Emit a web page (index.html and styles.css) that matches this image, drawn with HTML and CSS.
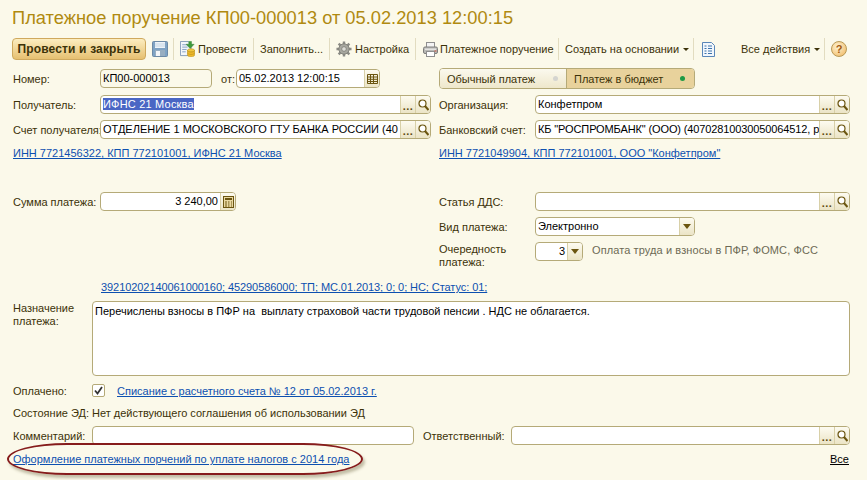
FILE: index.html
```html
<!DOCTYPE html>
<html lang="ru">
<head>
<meta charset="utf-8">
<title>Платежное поручение</title>
<link rel="stylesheet" href="styles.css">
</head>
<body>
<div class="page">
  <h1 class="title">Платежное поручение КП00-000013 от 05.02.2013 12:00:15</h1>

  <div class="toolbar">
    <button class="primary">Провести и закрыть</button>
    <svg class="ic save" width="16" height="16" viewBox="0 0 16 16"><rect x=".5" y=".5" width="15" height="15" rx="1" fill="#7fa3c4" stroke="#6d8aa6"/><rect x="3" y="1" width="10" height="6" fill="#eef4f9"/><path d="M3 3h10M3 5h10" stroke="#c4d5e4"/><rect x="3" y="9" width="10" height="6" fill="#98aec1"/><rect x="4" y="10" width="4" height="5" fill="#f4f6f8"/></svg>
    <i class="sep s1"></i>
    <svg class="ic post" width="15" height="16" viewBox="0 0 17 17" preserveAspectRatio="none"><path d="M.5.5h9l3 3v12H.5z" fill="#f3f6fa" stroke="#7f97b5"/><path d="M2.500 4h6M2.500 6.500h6M2.500 9h5M2.500 11.500h4" stroke="#7e9cc0"/><path d="M10 0h3v3h3l-4.500 4.500L7 3h3z" transform="translate(0 .5)" fill="#3f9b3c" stroke="#2f7a2e" stroke-width=".5"/><ellipse cx="12.500" cy="10" rx="4" ry="1.800" fill="#f2c740" stroke="#b98d15" stroke-width=".6"/><path d="M8.500 10v5c0 1 1.800 1.800 4 1.800s4-.8 4-1.800v-5c0 1-1.800 1.800-4 1.800s-4-.8-4-1.800z" fill="#eeb92c" stroke="#b98d15" stroke-width=".6"/><path d="M8.500 12.500c0 1 1.800 1.800 4 1.800s4-.8 4-1.800" fill="none" stroke="#b98d15" stroke-width=".6"/></svg>
    <span class="tb t1">Провести</span>
    <i class="sep s2"></i>
    <span class="tb t2">Заполнить...</span>
    <i class="sep s2"></i>
    <svg class="ic gear" width="16" height="16" viewBox="0 0 17 17"><g stroke="#8b8b85" stroke-width="2.600" stroke-linecap="butt"><path d="M8.500 .5v16M.5 8.500h16M2.800 2.800l11.400 11.400M14.200 2.800L2.800 14.200"/></g><circle cx="8.500" cy="8.500" r="5.500" fill="#a8a8a0" stroke="#7f7f78"/><circle cx="8.500" cy="8.500" r="2.500" fill="#dcdcd6" stroke="#85857e"/></svg>
    <span class="tb t3">Настройка</span>
    <i class="sep s3"></i>
    <svg class="ic print" width="15" height="15" viewBox="0 0 15 15"><rect x="3.500" y=".5" width="8" height="5" fill="#f4f4f4" stroke="#8f8f8f"/><rect x=".5" y="5" width="14" height="6.500" rx="1.500" fill="#b9b9b6" stroke="#7e7e7c"/><rect x="2" y="6.500" width="11" height="1.500" fill="#e4e4e1"/><rect x="3.500" y="9.500" width="8" height="5" fill="#fff" stroke="#8f8f8f"/><rect x="11.500" y="8.500" width="2" height="1" fill="#d2553f"/></svg>
    <span class="tb t4">Платежное поручение</span>
    <i class="sep s2"></i>
    <span class="tb t5">Создать на основании</span><i class="arrow"></i>
    <i class="sep s4"></i>
    <svg class="ic doc" width="13" height="15" viewBox="0 0 13 15"><path d="M.5.5h9l3 3v11H.5z" fill="#f2f7fc" stroke="#5a87b8"/><path d="M2.500 4h2M6 4h4M2.500 6.500h2M6 6.500h4M2.500 9h2M6 9h4M2.500 11.500h2M6 11.500h4" stroke="#3d74ad"/></svg>
    <span class="tb t6">Все действия</span><i class="arrow a2"></i>
    <i class="sep s5"></i>
    <span class="help">?</span>
  </div>

  <div class="columns">
    <div class="col col-left">
      <div class="row">
        <span class="lbl">Номер:</span>
        <div class="field readonly w112"><span class="val">КП00-000013</span></div>
        <span class="from">от:</span>
        <div class="field w144"><span class="val">05.02.2013 12:00:15</span>
          <span class="fbtn"><svg width="11" height="11" viewBox="0 0 11 11"><path d="M.5 1.500h10v9H.5zM.5 4h10M.5 6.300h10M.5 8.500h10M3.500 1.500v9M6.500 1.500v9" fill="none" stroke="#6b5510"/></svg></span>
        </div>
      </div>
      <div class="row second">
        <span class="lbl">Получатель:</span>
        <div class="field grow"><span class="val"><mark class="sel">ИФНС 21 Москва</mark></span>
          <span class="fbtn dots">...</span>
          <span class="fbtn"><svg class="lens" width="11" height="12" viewBox="0 0 11 12"><circle cx="4.500" cy="4.500" r="3.500" fill="#fff" stroke="#6b5510" stroke-width="1.200"/><path d="M7 7l3.500 4" stroke="#6b5510" stroke-width="2"/></svg></span>
        </div>
      </div>
      <div class="row">
        <span class="lbl">Счет получателя:</span>
        <div class="field grow"><span class="val">ОТДЕЛЕНИЕ 1 МОСКОВСКОГО ГТУ БАНКА РОССИИ (40</span>
          <span class="fbtn dots">...</span>
          <span class="fbtn"><svg class="lens" width="11" height="12" viewBox="0 0 11 12"><circle cx="4.500" cy="4.500" r="3.500" fill="#fff" stroke="#6b5510" stroke-width="1.200"/><path d="M7 7l3.500 4" stroke="#6b5510" stroke-width="2"/></svg></span>
        </div>
      </div>
      <a class="link link-row" href="#">ИНН 7721456322, КПП 772101001, ИФНС 21 Москва</a>
      <div class="row sum-row">
        <span class="lbl">Сумма платежа:</span>
        <div class="field w136"><span class="val right">3 240,00</span>
          <span class="fbtn"><svg width="11" height="12" viewBox="0 0 11 12"><rect x=".5" y=".5" width="10" height="11" fill="#e9d8a0" stroke="#6b5510"/><rect x="2" y="2" width="7" height="2" fill="#6b5510"/><path d="M2 6h2M5 6h1.500M8 6h1M2 8h2M5 8h1.500M8 8h1M2 10h2M5 10h1.500M8 10h1" stroke="#6b5510"/></svg></span>
        </div>
      </div>
    </div>

    <div class="col col-right">
      <div class="tumbler">
        <span class="tum-item">Обычный платеж<i class="dot off"></i></span>
        <span class="tum-item on">Платеж в бюджет<i class="dot green"></i></span>
      </div>
      <div class="row second">
        <span class="lbl rlbl">Организация:</span>
        <div class="field grow"><span class="val">Конфетпром</span>
          <span class="fbtn dots">...</span>
          <span class="fbtn"><svg class="lens" width="11" height="12" viewBox="0 0 11 12"><circle cx="4.500" cy="4.500" r="3.500" fill="#fff" stroke="#6b5510" stroke-width="1.200"/><path d="M7 7l3.500 4" stroke="#6b5510" stroke-width="2"/></svg></span>
        </div>
      </div>
      <div class="row">
        <span class="lbl rlbl">Банковский счет:</span>
        <div class="field grow"><span class="val tight">КБ "РОСПРОМБАНК" (ООО) (40702810030050064512, р</span>
          <span class="fbtn dots">...</span>
          <span class="fbtn"><svg class="lens" width="11" height="12" viewBox="0 0 11 12"><circle cx="4.500" cy="4.500" r="3.500" fill="#fff" stroke="#6b5510" stroke-width="1.200"/><path d="M7 7l3.500 4" stroke="#6b5510" stroke-width="2"/></svg></span>
        </div>
      </div>
      <a class="link link-row" href="#">ИНН 7721049904, КПП 772101001, ООО "Конфетпром"</a>
      <div class="row sum-row">
        <span class="lbl rlbl">Статья ДДС:</span>
        <div class="field grow"><span class="val"></span>
          <span class="fbtn dots">...</span>
          <span class="fbtn"><svg class="lens" width="11" height="12" viewBox="0 0 11 12"><circle cx="4.500" cy="4.500" r="3.500" fill="#fff" stroke="#6b5510" stroke-width="1.200"/><path d="M7 7l3.500 4" stroke="#6b5510" stroke-width="2"/></svg></span>
        </div>
      </div>
      <div class="row">
        <span class="lbl rlbl">Вид платежа:</span>
        <div class="field w160"><span class="val">Электронно</span>
          <span class="fbtn"><i class="tri"></i></span>
        </div>
      </div>
      <div class="row row-two">
        <span class="lbl rlbl two">Очередность платежа:</span>
        <div class="field w48"><span class="val right">3</span>
          <span class="fbtn"><i class="tri"></i></span>
        </div>
        <span class="note">Оплата труда и взносы в ПФР, ФОМС, ФСС</span>
      </div>
    </div>
  </div>

  <a class="link kbk" href="#">39210202140061000160; 45290586000; ТП; МС.01.2013; 0; 0; НС; Статус: 01;</a>

  <div class="purpose">
    <span class="lbl lbl79 two">Назначение платежа:</span>
    <div class="area">Перечислены взносы в ПФР на&nbsp; выплату страховой части трудовой пенсии . НДС не облагается.</div>
  </div>

  <div class="row paid">
    <span class="lbl lbl79">Оплачено:</span>
    <span class="check"><svg width="9" height="9" viewBox="0 0 9 9"><path d="M1 4.500l2.500 3L8 1" fill="none" stroke="#333" stroke-width="1.800"/></svg></span>
    <a class="link" href="#">Списание с расчетного счета № 12 от 05.02.2013 г.</a>
  </div>

  <div class="state"><span class="lbl lbl79">Состояние ЭД:</span><span class="state-val">Нет действующего соглашения об использовании ЭД</span></div>

  <div class="comment">
    <span class="lbl lbl79">Комментарий:</span>
    <div class="field w322"></div>
    <span class="resp">Ответственный:</span>
    <div class="field grow"><span class="val"></span>
      <span class="fbtn dots">...</span>
      <span class="fbtn"><svg class="lens" width="11" height="12" viewBox="0 0 11 12"><circle cx="4.500" cy="4.500" r="3.500" fill="#fff" stroke="#6b5510" stroke-width="1.200"/><path d="M7 7l3.500 4" stroke="#6b5510" stroke-width="2"/></svg></span>
    </div>
  </div>

  <div class="bottom">
    <a class="link" href="#">Оформление платежных порчений по уплате налогов с 2014 года</a>
    <a class="all" href="#">Все</a>
  </div>

  <div class="oval"></div>
</div>
</body>
</html>
```

FILE: styles.css
```css
* { box-sizing: border-box; }
html, body { margin: 0; padding: 0; }
body {
  width: 867px;
  height: 480px;
  overflow: hidden;
  background: #fbf9ea;
  font-family: "Liberation Sans", Arial, sans-serif;
  font-size: 11px;
  color: #3c3208;
}
.page { position: relative; width: 867px; height: 480px; padding: 0 17px 0 13px; }
.title {
  margin: 0 0 0 -1px;
  height: 38px;
  padding-top: 7px;
  font-weight: normal;
  font-size: 18.3px;
  line-height: 22px;
  color: #b08a10;
  white-space: nowrap;
}
.toolbar { display: flex; align-items: center; height: 22px; margin-left: -1px; white-space: nowrap; }
.primary {
  flex: none;
  width: 134px;
  height: 22px;
  padding: 0;
  border: 1px solid #cfa95e;
  border-radius: 4px;
  background: linear-gradient(#fcedc0, #e6c071);
  font-family: inherit;
  font-size: 12px;
  letter-spacing: .15px;
  font-weight: bold;
  color: #3c3208;
}
.ic { flex: none; }
.save { margin-left: 6px; }
.sep { flex: none; width: 1px; height: 22px; background: #e2dcc0; }
.s1 { margin: 0 6px 0 5px; }
.post { margin-right: 3px; }
.tb { flex: none; }
.t1 { width: 49px; }
.t2 { width: 63px; }
.t3 { width: 54px; }
.t4 { width: 112px; }
.t5 { width: 115px; }
.t6 { width: 69px; margin-left: 26px; }
.s2 { margin: 0 6px; }
.s3 { margin: 0 7px 0 6px; }
.s4 { margin: 0 8px 0 4px; }
.s5 { margin: 0 6px 0 4px; }
.gear { margin-right: 3px; }
.print { margin-right: 2px; }
.arrow { flex: none; width: 0; height: 0; margin-left: 3px; border: 3px solid transparent; border-top: 3px solid #3c3208; border-bottom: 0; }
.a2 { margin-left: 4px; }
.help {
  flex: none;
  width: 16px;
  height: 16px;
  border: 1px solid #b99a55;
  border-radius: 50%;
  background: radial-gradient(circle at 40% 35%, #fff3d2, #eeb45c);
  text-align: center;
  font-size: 11px;
  line-height: 14px;
  font-weight: bold;
  color: #a25a10;
}
.columns { display: grid; grid-template-columns: 418px 411px; column-gap: 8px; margin-top: 8px; }
.col { display: flex; flex-direction: column; gap: 4px; }
.row { display: flex; align-items: center; height: 21px; }
.second { margin-top: 1px; }
.lbl { flex: none; width: 87px; white-space: nowrap; }
.rlbl { width: 96px; }
.lbl79 { width: 79px; }
.two { white-space: normal; line-height: 13px; }
.field {
  display: flex;
  flex: none;
  height: 19px;
  border: 1px solid #b5aa78;
  border-radius: 4px;
  background: #fff;
  overflow: hidden;
  color: #000;
}
.readonly { background: #fbf9ea; }
.grow { flex: 1 1 0; min-width: 0; }
.w112 { width: 112px; }
.w144 { width: 144px; }
.w136 { width: 136px; }
.w160 { width: 160px; }
.w48 { width: 48px; }
.w322 { width: 322px; }
.from { flex: none; margin: 0 3px 0 9px; width: 12px; }
.val { flex: 1 1 0; min-width: 0; padding: 0 2px; line-height: 17px; overflow: hidden; white-space: nowrap; }
.tight { letter-spacing: -.12px; }
.right { text-align: right; }
.sel { background: #4a66c4; color: #fff; letter-spacing: .2px; }
.fbtn {
  display: flex;
  align-items: center;
  justify-content: center;
  flex: none;
  width: 15px;
  border-left: 1px solid #d8d0a8;
  background: linear-gradient(#fdfbf0, #ebe4c6);
}
.dots { font-weight: bold; color: #5b4a10; align-items: flex-end; line-height: 14px; letter-spacing: .5px; }
.tri { width: 0; height: 0; border: 4px solid transparent; border-top: 5px solid #6b5510; border-bottom: 0; }
.link { color: #0d50b0; text-decoration: underline; white-space: nowrap; }
.link-row { display: block; height: 14px; margin-top: 2px; line-height: 14px; }
.sum-row { margin-top: 27px; }
.tumbler {
  display: flex;
  width: 256px;
  height: 21px;
  border: 1px solid #b5aa78;
  border-radius: 4px;
  overflow: hidden;
}
.tum-item {
  display: flex;
  align-items: center;
  justify-content: space-between;
  padding: 0 8px 0 7px;
  background: linear-gradient(#fbf9ee, #eee7cb);
  border-right: 1px solid #b5aa78;
  width: 127px;
}
.tum-item.on { flex: 1; width: auto; border-right: 0; padding-right: 9px; background: #e8d29c; }
.dot { width: 5px; height: 5px; border-radius: 50%; }
.off { background: #d4d4d0; }
.green { background: #1f9a45; }
.row-two { align-items: flex-start; height: 27px; padding-top: 1px; }
.row-two .two { padding-top: 1px; }
.note { margin: 2px 0 0 9px; color: #6d6a55; letter-spacing: .1px; white-space: nowrap; }
.kbk { display: block; height: 14px; margin: 12px 0 0 88px; letter-spacing: -.07px; line-height: 14px; }
.purpose { display: flex; margin-top: 7px; }
.purpose .two { padding-top: 1px; }
.area {
  flex: 1;
  height: 75px;
  padding: 3px 2px;
  border: 1px solid #b5aa78;
  border-radius: 4px;
  background: #fff;
  color: #000;
  white-space: nowrap;
}
.paid { margin-top: 4px; }
.check {
  display: flex;
  align-items: center;
  justify-content: center;
  width: 13px;
  height: 13px;
  margin-right: 12px;
  border: 1px solid #b5aa78;
  border-radius: 2px;
  background: #fff;
}
.state { display: flex; height: 14px; margin-top: 5px; line-height: 14px; white-space: nowrap; }
.state-val { color: #3c3208; }
.comment { display: flex; align-items: center; height: 19px; margin-top: 6px; }
.resp { flex: none; width: 97px; padding-left: 9px; white-space: nowrap; }
.bottom { display: flex; justify-content: space-between; height: 14px; margin-top: 7px; line-height: 14px; }
.all { color: #000; text-decoration: underline; margin-right: 1px; }
.oval {
  position: absolute;
  left: 7px;
  top: 443px;
  width: 356px;
  height: 32px;
  border: 2px solid #861c1c;
  border-radius: 60px / 16px;
  box-shadow: 2px 3px 3px rgba(90, 80, 40, .35);
  pointer-events: none;
}
```
